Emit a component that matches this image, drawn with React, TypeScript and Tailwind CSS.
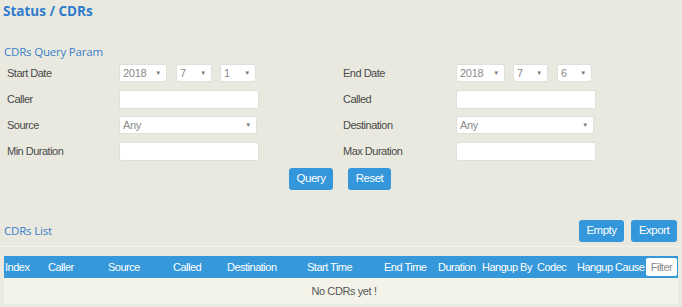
import React from "react";

function Sel({ w, value }: { w: string; value: string }) {
  return (
    <div className={`${w} h-[18px] bg-white border border-[#e0e0da] rounded-[2px] flex items-center justify-between pl-[3px] pr-[5px] text-[11px] tracking-[-0.3px] text-[#8a8a8a]`}>
      <span>{value}</span>
      <span className="text-[6px] text-[#777]">▼</span>
    </div>
  );
}

function Inp() {
  return <div className="w-[140px] h-[19px] bg-white border border-[#e0e0da] rounded-[2px]" />;
}

function Row({ label, children, lw }: { label: string; children: React.ReactNode; lw: string }) {
  return (
    <div className="h-[26px] flex items-center">
      <div className={`${lw} text-[11px] tracking-[-0.5px] text-[#4a4a4a]`}>{label}</div>
      <div className="flex items-center">{children}</div>
    </div>
  );
}

function Btn({ children, w }: { children: React.ReactNode; w: string }) {
  return (
    <div className={`${w} h-[22px] rounded-[3px] bg-[#3496db] text-white text-[11.5px] tracking-[-0.5px] flex items-center justify-center`}>
      {children}
    </div>
  );
}

export default function App() {
  const cols: [string, string][] = [
    ["Index", "w-[43px]"],
    ["Caller", "w-[60px]"],
    ["Source", "w-[65px]"],
    ["Called", "w-[54px]"],
    ["Destination", "w-[80px]"],
    ["Start Time", "w-[77px]"],
    ["End Time", "w-[54px]"],
    ["Duration", "w-[44px]"],
    ["Hangup By", "w-[55px]"],
    ["Codec", "w-[40px]"],
    ["Hangup Cause", "w-[70px]"],
  ];
  return (
    <div className="w-[682px] h-[307px] bg-[#e9e9e0] overflow-hidden font-['Liberation_Sans',Arial,sans-serif]">
      <div className="h-[22px] pl-[3px] flex items-center font-['Open_Sans',sans-serif] font-bold text-[13.5px] text-[#2e7ccc]">
        Status / CDRs
      </div>
      <div className="h-[38px] pl-[4px] pt-[22px] font-['Open_Sans',sans-serif] text-[11.5px] tracking-[-0.2px] leading-[16px] text-[#3a7fc8]">
        CDRs Query Param
      </div>
      <div className="flex pl-[7px]">
        <div className="w-[336px]">
          <Row label="Start Date" lw="w-[112px]">
            <Sel w="w-[48px]" value="2018" />
            <div className="w-[9px]" />
            <Sel w="w-[36px]" value="7" />
            <div className="w-[8px]" />
            <Sel w="w-[36px]" value="1" />
          </Row>
          <Row label="Caller" lw="w-[112px]"><Inp /></Row>
          <Row label="Source" lw="w-[112px]"><Sel w="w-[138px]" value="Any" /></Row>
          <Row label="Min Duration" lw="w-[112px]"><Inp /></Row>
        </div>
        <div className="w-[300px]">
          <Row label="End Date" lw="w-[113px]">
            <Sel w="w-[49px]" value="2018" />
            <div className="w-[8px]" />
            <Sel w="w-[35px]" value="7" />
            <div className="w-[9px]" />
            <Sel w="w-[35px]" value="6" />
          </Row>
          <Row label="Called" lw="w-[113px]"><Inp /></Row>
          <Row label="Destination" lw="w-[113px]"><Sel w="w-[138px]" value="Any" /></Row>
          <Row label="Max Duration" lw="w-[113px]"><Inp /></Row>
        </div>
      </div>
      <div className="mt-[4px] flex pl-[289px] gap-[15px]">
        <Btn w="w-[44px]">Query</Btn>
        <Btn w="w-[43px]">Reset</Btn>
      </div>
      <div className="mt-[30px] h-[22px] flex items-center pl-[4px] pr-[5px]">
        <div className="flex-1 font-['Open_Sans',sans-serif] text-[11.5px] tracking-[-0.2px] text-[#3a7fc8]">CDRs List</div>
        <div className="flex gap-[7px]">
          <Btn w="w-[45px]">Empty</Btn>
          <Btn w="w-[46px]">Export</Btn>
        </div>
      </div>
      <div className="mt-[4px] h-[1px] bg-[#f4f4ee]" />
      <div className="mt-[9px] ml-[4px] w-[674px]">
        <div className="h-[22px] bg-[#3598da] flex items-center text-white text-[11px] tracking-[-0.5px] whitespace-nowrap">
          {cols.map(([c, w]) => (
            <div key={c} className={`${w} pl-[1px]`}>{c}</div>
          ))}
          <div className="ml-auto mr-[1px] w-[31px] h-[18px] bg-white rounded-[2px] text-[#888] text-[11px] flex items-center justify-center">
            Filter
          </div>
        </div>
        <div className="h-[26px] bg-[#f3f3ea] flex items-center justify-center pl-[6px] text-[11px] tracking-[-0.4px] text-[#555]">
          No CDRs yet !
        </div>
      </div>
    </div>
  );
}
